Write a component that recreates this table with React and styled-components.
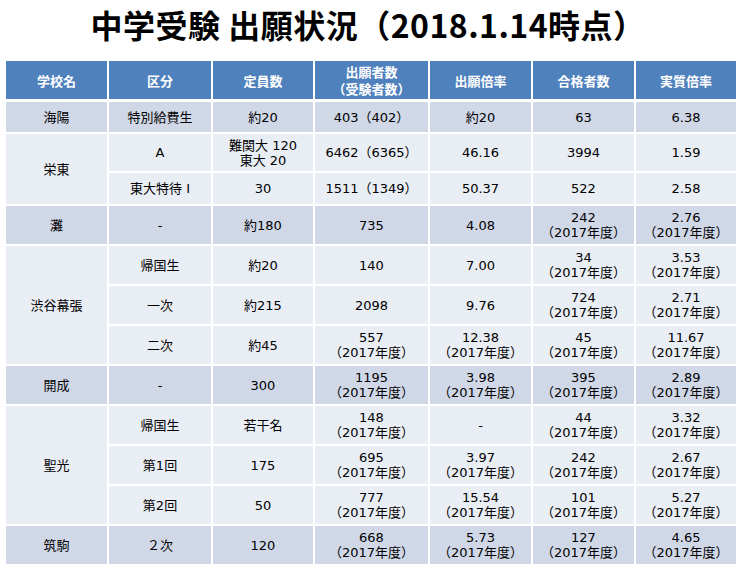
import React from "react";
import styled, { createGlobalStyle } from "styled-components";

const GlobalStyle = createGlobalStyle`
  html, body {
    margin: 0;
    padding: 0;
    background: #ffffff;
  }
  body {
    font-family: "DejaVu Sans", "Noto Sans CJK JP", sans-serif;
  }
`;

const NOTE = "（2017年度）";

const rows = [
  {
    school: "海陽",
    dark: true,
    subs: [{ h: 30, cells: ["特別給費生", "約20", "403（402）", "約20", "63", "6.38"] }],
  },
  {
    school: "栄東",
    subs: [
      { h: 37, cells: ["A", ["難関大 120", "東大 20"], "6462（6365）", "46.16", "3994", "1.59"] },
      { h: 31, cells: ["東大特待 Ⅰ", "30", "1511（1349）", "50.37", "522", "2.58"] },
    ],
  },
  {
    school: "灘",
    dark: true,
    subs: [{ h: 38, cells: ["-", "約180", "735", "4.08", ["242", NOTE], ["2.76", NOTE]] }],
  },
  {
    school: "渋谷幕張",
    subs: [
      { h: 38, cells: ["帰国生", "約20", "140", "7.00", ["34", NOTE], ["3.53", NOTE]] },
      { h: 38, cells: ["一次", "約215", "2098", "9.76", ["724", NOTE], ["2.71", NOTE]] },
      { h: 38, cells: ["二次", "約45", ["557", NOTE], ["12.38", NOTE], ["45", NOTE], ["11.67", NOTE]] },
    ],
  },
  {
    school: "開成",
    dark: true,
    subs: [{ h: 38, cells: ["-", "300", ["1195", NOTE], ["3.98", NOTE], ["395", NOTE], ["2.89", NOTE]] }],
  },
  {
    school: "聖光",
    subs: [
      { h: 38, cells: ["帰国生", "若干名", ["148", NOTE], "-", ["44", NOTE], ["3.32", NOTE]] },
      { h: 38, cells: ["第1回", "175", ["695", NOTE], ["3.97", NOTE], ["242", NOTE], ["2.67", NOTE]] },
      { h: 38, cells: ["第2回", "50", ["777", NOTE], ["15.54", NOTE], ["101", NOTE], ["5.27", NOTE]] },
    ],
  },
  {
    school: "筑駒",
    dark: true,
    subs: [{ h: 38, cells: ["２次", "120", ["668", NOTE], ["5.73", NOTE], ["127", NOTE], ["4.65", NOTE]] }],
  },
];

const columns = [101, 102, 100, 113, 101, 101, 100];
const heads = ["学校名", "区分", "定員数", ["出願者数", "（受験者数）"], "出願倍率", "合格者数", "実質倍率"];

function Lines({ value }) {
  if (!Array.isArray(value)) return value;
  return value.map((line, i) => <Line key={i}>{line}</Line>);
}

export default function App() {
  return (
    <Page>
      <GlobalStyle />
      <Title>中学受験 出願状況（2018.1.14時点）</Title>
      <Table>
        <colgroup>
          {columns.map((w, i) => (
            <col key={i} style={{ width: w }} />
          ))}
        </colgroup>
        <thead>
          <tr>
            {heads.map((h, i) => (
              <Th key={i}>
                <Lines value={h} />
              </Th>
            ))}
          </tr>
        </thead>
        <tbody>
          {rows.map((group) =>
            group.subs.map((sub, si) => (
              <tr key={group.school + si}>
                {si === 0 && (
                  <Td $dark={group.dark} rowSpan={group.subs.length}>
                    {group.school}
                  </Td>
                )}
                {sub.cells.map((c, ci) => (
                  <Td key={ci} $dark={group.dark} $h={sub.h}>
                    <Lines value={c} />
                  </Td>
                ))}
              </tr>
            ))
          )}
        </tbody>
      </Table>
    </Page>
  );
}

const Page = styled.div`
  width: 746px;
  padding-left: 4px;
  box-sizing: border-box;
`;

const Title = styled.h1`
  margin: 0;
  height: 61px;
  padding-top: 4px;
  box-sizing: border-box;
  text-align: center;
  font-family: "Noto Sans CJK JP", sans-serif;
  font-weight: 700;
  font-size: 32px;
  line-height: 40px;
  letter-spacing: 0.5px;
  color: #000000;
  padding-right: 14px;
`;

const Table = styled.table`
  width: 734px;
  table-layout: fixed;
  border-collapse: separate;
  border-spacing: 2px;
  margin-top: -2px;
`;

const Th = styled.th`
  height: 38px;
  padding: 0;
  background: #4f81bd;
  color: #ffffff;
  font-family: "Noto Sans CJK JP", sans-serif;
  font-weight: 700;
  font-size: 13px;
  line-height: 17px;
  text-align: center;
  vertical-align: middle;
  border-bottom: 1px solid #ffffff;
`;

const Td = styled.td`
  height: ${(p) => (p.$h ? `${p.$h}px` : "auto")};
  padding: 0;
  background: ${(p) => (p.$dark ? "#d0d8e8" : "#e9edf4")};
  color: #000000;
  font-size: 13px;
  line-height: 15px;
  text-align: center;
  vertical-align: middle;
  white-space: nowrap;
`;

const Line = styled.div`
  display: block;
`;
